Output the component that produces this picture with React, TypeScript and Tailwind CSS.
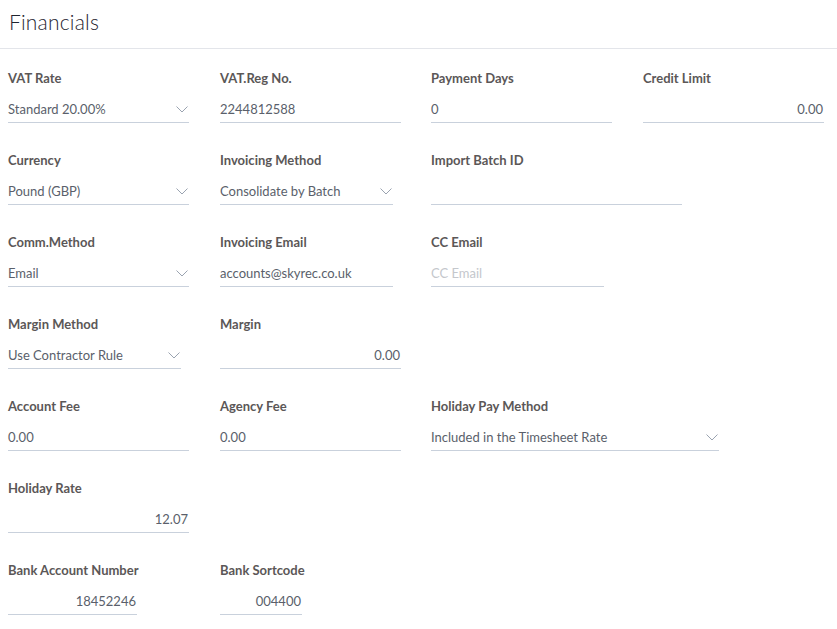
import React from 'react';

type Field = {
  label: string;
  value?: string;
  placeholder?: string;
  width: string;
  select?: boolean;
  right?: boolean;
};

const rows: (Field | null)[][] = [
  [
    { label: 'VAT Rate', value: 'Standard 20.00%', width: 'w-[181px]', select: true },
    { label: 'VAT.Reg No.', value: '2244812588', width: 'w-[181px]' },
    { label: 'Payment Days', value: '0', width: 'w-[181px]' },
    { label: 'Credit Limit', value: '0.00', width: 'w-[181px]', right: true },
  ],
  [
    { label: 'Currency', value: 'Pound (GBP)', width: 'w-[181px]', select: true },
    { label: 'Invoicing Method', value: 'Consolidate by Batch', width: 'w-[173px]', select: true },
    { label: 'Import Batch ID', value: '', width: 'w-[251px]' },
    null,
  ],
  [
    { label: 'Comm.Method', value: 'Email', width: 'w-[181px]', select: true },
    { label: 'Invoicing Email', value: 'accounts@skyrec.co.uk', width: 'w-[173px]' },
    { label: 'CC Email', placeholder: 'CC Email', width: 'w-[173px]' },
    null,
  ],
  [
    { label: 'Margin Method', value: 'Use Contractor Rule', width: 'w-[173px]', select: true },
    { label: 'Margin', value: '0.00', width: 'w-[181px]', right: true },
    null,
    null,
  ],
  [
    { label: 'Account Fee', value: '0.00', width: 'w-[181px]' },
    { label: 'Agency Fee', value: '0.00', width: 'w-[181px]' },
    { label: 'Holiday Pay Method', value: 'Included in the Timesheet Rate', width: 'w-[288px]', select: true },
    null,
  ],
  [
    { label: 'Holiday Rate', value: '12.07', width: 'w-[181px]', right: true },
    null,
    null,
    null,
  ],
  [
    { label: 'Bank Account Number', value: '18452246', width: 'w-[129px]', right: true },
    { label: 'Bank Sortcode', value: '004400', width: 'w-[82px]', right: true },
    null,
    null,
  ],
];

function Chevron() {
  return (
    <svg width="12" height="7" viewBox="0 0 12 7" className="shrink-0">
      <path d="M0.5 0.5 L6 6 L11.5 0.5" fill="none" stroke="#9aa3b0" strokeWidth="1" />
    </svg>
  );
}

function FormField({ field }: { field: Field }) {
  return (
    <div className={`${field.width} flex flex-col`}>
      <div className="h-4 text-[13px] leading-4 font-bold text-[#5b5757] whitespace-nowrap">{field.label}</div>
      <div className="mt-[9px] h-7 pt-[2px] flex items-center border-b border-[#c9d1dc] text-[13px] text-[#5a5f6b]">
        {field.placeholder ? (
          <span className="text-[#c4c7cc]">{field.placeholder}</span>
        ) : (
          <span className={`flex-1 whitespace-nowrap ${field.right ? 'text-right pr-px' : ''}`}>{field.value}</span>
        )}
        {field.select && (
          <span className="pr-[1px] pl-2 flex items-center">
            <Chevron />
          </span>
        )}
      </div>
    </div>
  );
}

export default function App() {
  return (
    <div className="w-[837px] h-[629px] bg-white overflow-hidden" style={{ fontFamily: 'Lato, "Open Sans", sans-serif' }}>
      <div className="h-[49px] border-b border-[#e3e5ea] flex items-start pl-[9px] pt-[8px]">
        <h1 className="text-[21px] leading-7 font-light text-[#1f2430] tracking-[0.2px]">Financials</h1>
      </div>
      <div className="pl-2 pt-[21px] flex flex-col gap-y-[29px]">
        {rows.map((row, i) => (
          <div key={i} className="grid grid-cols-[212px_211px_212px_181px]">
            {row.map((f, j) => (
              <div key={j}>{f && <FormField field={f} />}</div>
            ))}
          </div>
        ))}
      </div>
    </div>
  );
}
